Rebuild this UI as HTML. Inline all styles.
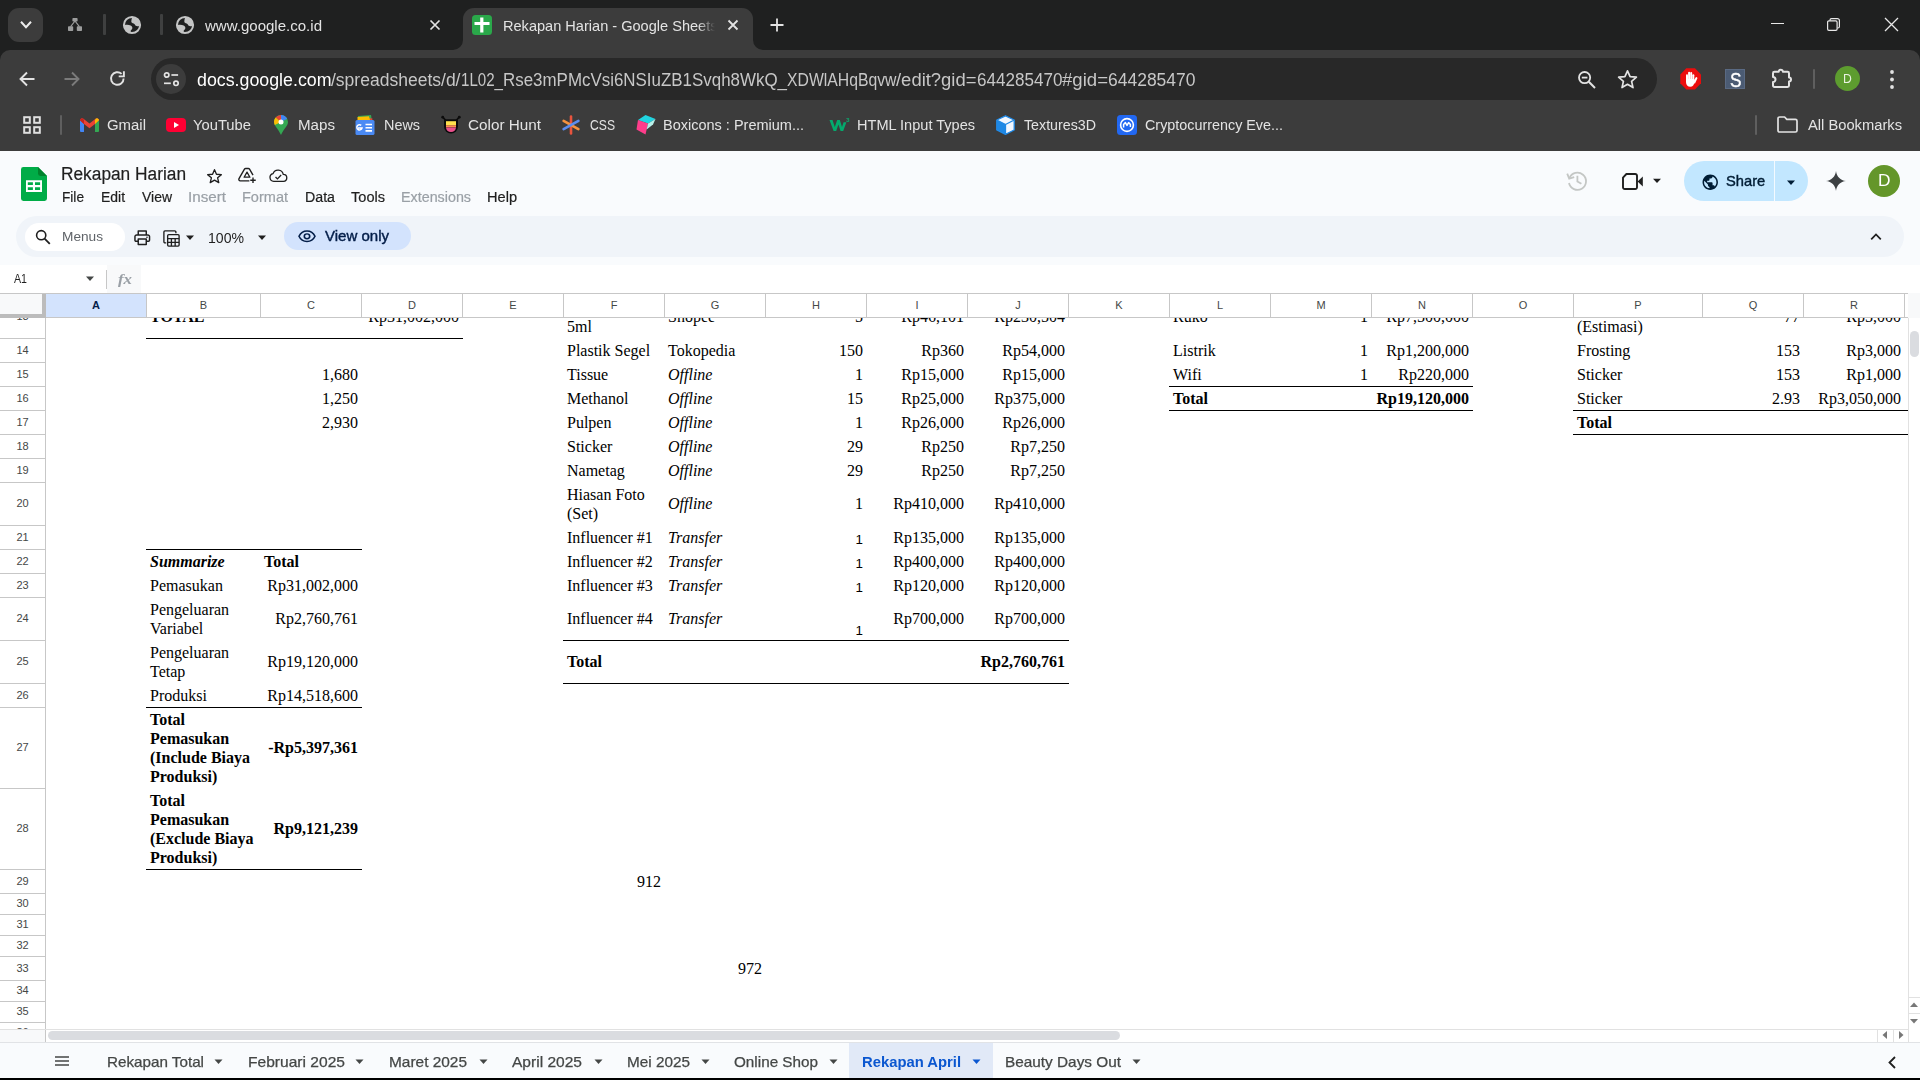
<!DOCTYPE html>
<html lang="id"><head><meta charset="utf-8"><title>Rekapan Harian - Google Sheets</title>
<style>
html,body{margin:0;padding:0;}
body{width:1920px;height:1080px;overflow:hidden;position:relative;background:#fff;font-family:"Liberation Sans",Arial,sans-serif;}
.t{position:absolute;white-space:nowrap;display:block;}
.b{position:absolute;box-sizing:border-box;}
svg{position:absolute;overflow:visible;}
.c{position:absolute;box-sizing:border-box;display:flex;font-family:"Liberation Serif","Times New Roman",serif;font-size:16px;line-height:19px;color:#000;padding:0 3px;overflow:hidden;}
.c.l{justify-content:flex-start;text-align:left;}
.c.r{justify-content:flex-end;text-align:right;}
.c.m{align-items:center;}
.c.bt{align-items:flex-end;}
.rh{position:absolute;left:0;width:45px;text-align:center;font-size:11px;color:#444746;font-family:"Liberation Sans",Arial,sans-serif;border-bottom:1px solid #c7c7c7;border-right:1px solid #c7c7c7;box-sizing:content-box;background:#fff;}
.ch{position:absolute;top:294px;height:23px;line-height:23px;text-align:center;font-size:11px;color:#444746;font-family:"Liberation Sans",Arial,sans-serif;border-right:1px solid #c7c7c7;box-sizing:content-box;background:#fff;}
</style></head><body>
<div class="b" style="left:0px;top:0px;width:1920px;height:151px;background:#1f2020;"></div>
<div class="b" style="left:0px;top:50px;width:1920px;height:101px;background:#3c3c3c;border-radius:10px 10px 0 0;"></div>
<div class="b" style="left:8px;top:7.7px;width:35px;height:34.5px;background:#3c3c3c;border-radius:11px;"></div>
<svg style="left:18.500px;top:19.300px" width="14" height="12" viewBox="0 0 14 12"><path d="M2 2.800 L7 8.200 L12 2.800" fill="none" stroke="#ececec" stroke-width="2"/></svg>
<svg style="left:68px;top:18px" width="14" height="13" viewBox="0 0 14 13"><g fill="#9c9d9d"><rect x="4.4" y="0" width="5.2" height="3.6" rx="0.8"/><rect x="0" y="8.200" width="5.2" height="4.8" rx="0.8"/><rect x="8.800" y="8.200" width="5.2" height="4.8" rx="0.8"/></g><path d="M7 3 L2.600 8.600 M7 3 L11.4 8.600" stroke="#9c9d9d" stroke-width="1.2" fill="none"/></svg>
<div class="b" style="left:103px;top:14px;width:2.5px;height:21px;background:#3f4040;border-radius:1px;"></div>
<svg style="left:123px;top:16px" width="18" height="18" viewBox="0 0 18 18"><circle cx="9" cy="9" r="8.1" fill="none" stroke="#c4c5c5" stroke-width="2"/><path d="M9.300 1 A8 8 0 0 1 17 8.900 C16 10.300 14 10.400 12.800 9.800 C11.800 9.200 11.900 7.900 10.700 7.500 C9.500 7.100 8.200 6.700 8.300 5.300 C8.400 3.800 8.800 2.200 9.300 1Z" fill="#c4c5c5"/><path d="M1 9.300 C3.400 8.500 6 8.700 7.600 9.600 C8.800 10.200 9.700 11.200 9.300 12.400 C9 13.400 7.900 13.700 7.700 14.700 C7.500 15.600 7.800 16.400 8.100 17 A8 8 0 0 1 1 9.300Z" fill="#c4c5c5"/></svg>
<div class="b" style="left:160px;top:14px;width:2.5px;height:21px;background:#3f4040;border-radius:1px;"></div>
<svg style="left:176px;top:16px" width="18" height="18" viewBox="0 0 18 18"><circle cx="9" cy="9" r="8.1" fill="none" stroke="#c4c5c5" stroke-width="2"/><path d="M9.300 1 A8 8 0 0 1 17 8.900 C16 10.300 14 10.400 12.800 9.800 C11.800 9.200 11.900 7.900 10.700 7.500 C9.500 7.100 8.200 6.700 8.300 5.300 C8.400 3.800 8.800 2.200 9.300 1Z" fill="#c4c5c5"/><path d="M1 9.300 C3.400 8.500 6 8.700 7.600 9.600 C8.800 10.200 9.700 11.200 9.300 12.400 C9 13.400 7.900 13.700 7.700 14.700 C7.500 15.600 7.800 16.400 8.100 17 A8 8 0 0 1 1 9.300Z" fill="#c4c5c5"/></svg>
<span class="t" id="t1" style="left:205px;top:10.5px;height:30px;line-height:30px;font-size:14.5px;color:#e3e3e3;font-weight:400;font-family:'Liberation Sans', Arial, sans-serif;font-style:normal;transform:scaleX(1.0368);transform-origin:left center;">www.google.co.id</span>
<svg style="left:429px;top:19px" width="12" height="12" viewBox="0 0 12 12"><path d="M1.5 1.5 L10.5 10.5 M10.5 1.5 L1.5 10.5" stroke="#e3e3e3" stroke-width="1.7" fill="none"/></svg>
<div class="b" style="left:463px;top:8px;width:290px;height:44px;background:#3c3c3c;border-radius:11px 11px 0 0;"></div>
<svg style="left:453px;top:40px" width="10" height="10" viewBox="0 0 10 10"><path d="M10 0 V10 H0 A10 10 0 0 0 10 0Z" fill="#3c3c3c"/></svg>
<svg style="left:753px;top:40px" width="10" height="10" viewBox="0 0 10 10"><path d="M0 0 V10 H10 A10 10 0 0 1 0 0Z" fill="#3c3c3c"/></svg>
<svg style="left:472px;top:15px" width="20" height="20" viewBox="0 0 20 20"><rect width="20" height="20" rx="3.5" fill="#2aa84a"/><path d="M8.2 2.5 H11.4 V7 H17.5 V10 H11.4 V17.5 H8.2 V10 H2.5 V7 H8.2Z" fill="#fff"/></svg>
<div class="b" style="left:503px;top:8px;width:212px;height:36px;overflow:hidden;-webkit-mask-image:linear-gradient(90deg,#000 92%,transparent 100%);mask-image:linear-gradient(90deg,#000 92%,transparent 100%);"><span class="t" id="t2" style="left:0px;top:2.5px;height:30px;line-height:30px;font-size:14.5px;color:#e3e3e3;font-weight:400;font-family:'Liberation Sans', Arial, sans-serif;font-style:normal;transform:scaleX(1.0042);transform-origin:left center;">Rekapan Harian - Google Sheets</span></div>
<svg style="left:727px;top:19px" width="12" height="12" viewBox="0 0 12 12"><path d="M1.5 1.5 L10.5 10.5 M10.5 1.5 L1.5 10.5" stroke="#e3e3e3" stroke-width="1.8" fill="none"/></svg>
<svg style="left:770px;top:18px" width="14" height="14" viewBox="0 0 14 14"><path d="M7 0.5 V13.5 M0.5 7 H13.5" stroke="#e3e3e3" stroke-width="1.8" fill="none"/></svg>
<div class="b" style="left:1771px;top:23px;width:13px;height:1.3px;background:#e8e8e8;"></div>
<svg style="left:1827px;top:18px" width="13" height="13" viewBox="0 0 13 13"><rect x="0.6" y="2.900" width="9.5" height="9.5" rx="1.300" fill="none" stroke="#e8e8e8" stroke-width="1.2"/><path d="M3 2.700 V2.100 A1.500 1.500 0 0 1 4.500 0.600 H10.400 A2 2 0 0 1 12.400 2.600 V8.500 A1.500 1.500 0 0 1 10.900 10 H10.300" fill="none" stroke="#e8e8e8" stroke-width="1.2"/></svg>
<svg style="left:1884px;top:17px" width="15" height="15" viewBox="0 0 15 15"><path d="M1 1 L14 14 M14 1 L1 14" stroke="#e8e8e8" stroke-width="1.3" fill="none"/></svg>
<svg style="left:19px;top:71px" width="16" height="16" viewBox="0 0 16 16"><path d="M15.5 8 H2 M8 1.5 L1.5 8 L8 14.5" fill="none" stroke="#e3e3e3" stroke-width="1.9"/></svg>
<svg style="left:64px;top:71px" width="16" height="16" viewBox="0 0 16 16"><path d="M0.5 8 H14 M8 1.5 L14.5 8 L8 14.5" fill="none" stroke="#7b7b7b" stroke-width="1.9"/></svg>
<svg style="left:109px;top:70px" width="17" height="17" viewBox="0 0 17 17"><path d="M14.6 8.5 A6.3 6.3 0 1 1 12.6 3.9" fill="none" stroke="#e3e3e3" stroke-width="1.9"/><path d="M14.9 1.2 V6.4 H9.7" fill="none" stroke="#e3e3e3" stroke-width="1.9"/></svg>
<div class="b" style="left:151px;top:58px;width:1506px;height:42px;background:#282828;border-radius:21px;"></div>
<div class="b" style="left:156px;top:63.7px;width:30px;height:30px;background:#3c3c3c;border-radius:15px;"></div>
<svg style="left:163px;top:71px" width="16" height="16" viewBox="0 0 16 16"><g fill="none" stroke="#e3e3e3" stroke-width="1.700"><circle cx="3.700" cy="4" r="2.200"/><path d="M8.400 4 H15.100"/><circle cx="13" cy="12.300" r="2.200"/><path d="M1 12.300 H7.800"/></g></svg>
<span class="t" id="t3" style="left:196.5px;top:64.5px;height:30px;line-height:30px;font-size:17.5px;color:#ffffff;font-weight:400;font-family:'Liberation Sans', Arial, sans-serif;font-style:normal;transform:scaleX(1.0165);transform-origin:left center;">docs.google.com</span>
<span class="t" id="t4" style="left:331px;top:64.5px;height:30px;line-height:30px;font-size:17.5px;color:#c7c7c7;font-weight:400;font-family:'Liberation Sans', Arial, sans-serif;font-style:normal;transform:scaleX(1.0008);transform-origin:left center;">/spreadsheets/d/</span>
<span class="t" id="t5" style="left:460.5px;top:64.5px;height:30px;line-height:30px;font-size:17.5px;color:#c7c7c7;font-weight:400;font-family:'Liberation Sans', Arial, sans-serif;font-style:normal;transform:scaleX(0.8629);transform-origin:left center;">1L02_</span>
<span class="t" id="t6" style="left:502.5px;top:64.5px;height:30px;line-height:30px;font-size:17.5px;color:#c7c7c7;font-weight:400;font-family:'Liberation Sans', Arial, sans-serif;font-style:normal;transform:scaleX(0.9669);transform-origin:left center;">Rse3mPMcVsi6NSIuZB1Svqh8WkQ_</span>
<span class="t" id="t7" style="left:786.5px;top:64.5px;height:30px;line-height:30px;font-size:17.5px;color:#c7c7c7;font-weight:400;font-family:'Liberation Sans', Arial, sans-serif;font-style:normal;transform:scaleX(0.9008);transform-origin:left center;">XDWlAHqBqvw</span>
<span class="t" id="t8" style="left:896px;top:64.5px;height:30px;line-height:30px;font-size:17.5px;color:#c7c7c7;font-weight:400;font-family:'Liberation Sans', Arial, sans-serif;font-style:normal;transform:scaleX(1.0538);transform-origin:left center;">/edit?gid=</span>
<span class="t" id="t9" style="left:976.5px;top:64.5px;height:30px;line-height:30px;font-size:17.5px;color:#c7c7c7;font-weight:400;font-family:'Liberation Sans', Arial, sans-serif;font-style:normal;transform:scaleX(0.9759);transform-origin:left center;">644285470</span>
<span class="t" id="t10" style="left:1062px;top:64.5px;height:30px;line-height:30px;font-size:17.5px;color:#c7c7c7;font-weight:400;font-family:'Liberation Sans', Arial, sans-serif;font-style:normal;transform:scaleX(1.0620);transform-origin:left center;">#gid=</span>
<span class="t" id="t11" style="left:1108px;top:64.5px;height:30px;line-height:30px;font-size:17.5px;color:#c7c7c7;font-weight:400;font-family:'Liberation Sans', Arial, sans-serif;font-style:normal;transform:scaleX(0.9988);transform-origin:left center;">644285470</span>
<svg style="left:1577px;top:70px" width="20" height="20" viewBox="0 0 20 20"><g fill="none" stroke="#e3e3e3" stroke-width="1.8"><circle cx="7.6" cy="7.6" r="5.6"/><path d="M11.8 11.8 L18 18" stroke-width="2"/><path d="M4.8 7.6 H10.4"/></g></svg>
<svg style="left:1617px;top:69px" width="21" height="20" viewBox="0 0 21 20"><path d="M10.5 1.8 L13.1 7.6 L19.4 8.2 L14.6 12.4 L16 18.6 L10.5 15.3 L5 18.6 L6.4 12.4 L1.6 8.2 L7.9 7.6Z" fill="none" stroke="#e3e3e3" stroke-width="1.7" stroke-linejoin="round"/></svg>
<svg style="left:1680px;top:68.300px" width="21.300" height="21.700" viewBox="0 0 21.300 21.700"><path d="M6.300 0.300 H15 L21 6.400 V15.300 L15 21.400 H6.300 L0.300 15.300 V6.400Z" fill="#ec0d0d"/><g fill="#fff"><rect x="6" y="6.200" width="2" height="8" rx="1"/><rect x="8.100" y="3.700" width="2" height="10" rx="1"/><rect x="10.200" y="4.100" width="2" height="10" rx="1"/><rect x="12.300" y="6.200" width="2" height="8" rx="1"/><path d="M6 11 H14.300 V14 C14.300 17 12.700 18.800 10.200 18.800 C7.700 18.800 6 17 6 14Z"/><path d="M13.300 13.500 L15.600 9.400 A1 1 0 0 1 17.300 10.400 L14.800 16Z"/></g></svg>
<div class="b" style="left:1725.4px;top:69.4px;width:20px;height:20px;background:#4b5b73;border:1px solid #5a6a83;"></div>
<span class="t" id="t12" style="left:1730px;top:64.6px;height:30px;line-height:30px;font-size:19.8px;color:#ffffff;font-weight:400;font-family:'Liberation Sans', Arial, sans-serif;font-style:normal;transform:scaleX(0.8710);transform-origin:left center;-webkit-text-stroke:0.4px #fff;">S</span>
<svg style="left:1769.700px;top:67px" width="24" height="24" viewBox="0 0 24 24"><path d="M4.400 4.800 H8.700 A2.100 2.100 0 0 1 12.900 4.800 H17.600 A1.400 1.400 0 0 1 19 6.200 V10.500 A2 2 0 0 1 19 14.500 V18.500 A1.400 1.400 0 0 1 17.600 19.900 H4.400 A1.400 1.400 0 0 1 3 18.500 V15.100 A2.500 2.500 0 0 0 3 10.100 V6.200 A1.400 1.400 0 0 1 4.400 4.800Z" fill="none" stroke="#e3e3e3" stroke-width="2" stroke-linejoin="round"/></svg>
<div class="b" style="left:1813px;top:69px;width:2px;height:20px;background:#5f5f5f;border-radius:1px;"></div>
<div class="b" style="left:1835px;top:66.3px;width:25px;height:25px;background:#5d9c2f;border-radius:13px;"></div>
<span class="t" id="t13" style="left:1843.2px;top:63.8px;height:30px;line-height:30px;font-size:12.5px;color:#eaf2e2;font-weight:400;font-family:'Liberation Sans', Arial, sans-serif;font-style:normal;transform:scaleX(0.9744);transform-origin:left center;">D</span>
<svg style="left:1889px;top:69px" width="6" height="21" viewBox="0 0 6 21"><g fill="#e3e3e3"><circle cx="3" cy="3" r="1.9"/><circle cx="3" cy="10.5" r="1.9"/><circle cx="3" cy="18" r="1.9"/></g></svg>
<svg style="left:23px;top:116px" width="18" height="18" viewBox="0 0 18 18"><g fill="none" stroke="#e0e0e0" stroke-width="2"><rect x="1.200" y="1.200" width="5.600" height="5.600"/><rect x="11.200" y="1.200" width="5.600" height="5.600"/><rect x="1.200" y="11.200" width="5.600" height="5.600"/><rect x="11.200" y="11.200" width="5.600" height="5.600"/></g></svg>
<div class="b" style="left:60px;top:115px;width:2px;height:20px;background:#5f5f5f;border-radius:1px;"></div>
<svg style="left:80px;top:118px" width="19" height="14" viewBox="0 0 19 14"><path d="M0 2 V13 A1 1 0 0 0 1 14 H4 V6Z" fill="#4285f4"/><path d="M19 2 V13 A1 1 0 0 1 18 14 H15 V6Z" fill="#34a853"/><path d="M0 2.2 A2 2 0 0 1 3.4 0.8 L9.5 5.6 L15.6 0.8 A2 2 0 0 1 19 2.2 L15 6 L9.5 10.2 L4 6Z" fill="#ea4335"/><path d="M0 2.2 L4 6 V2.4 L3.4 0.8 A2 2 0 0 0 0 2.2Z" fill="#c5221f"/><path d="M19 2.2 L15 6 V2.4 L15.6 0.8 A2 2 0 0 1 19 2.2Z" fill="#fbbc04"/></svg>
<span class="t" id="t14" style="left:107px;top:109.5px;height:30px;line-height:30px;font-size:15.5px;color:#e3e3e3;font-weight:400;font-family:'Liberation Sans', Arial, sans-serif;font-style:normal;transform:scaleX(0.9633);transform-origin:left center;">Gmail</span>
<svg style="left:166px;top:118px" width="20" height="14" viewBox="0 0 20 14"><rect width="20" height="14" rx="4" fill="#ff0033"/><path d="M8 4 L13 7 L8 10Z" fill="#fff"/></svg>
<span class="t" id="t15" style="left:193px;top:109.5px;height:30px;line-height:30px;font-size:15.5px;color:#e3e3e3;font-weight:400;font-family:'Liberation Sans', Arial, sans-serif;font-style:normal;transform:scaleX(0.9520);transform-origin:left center;">YouTube</span>
<svg style="left:274px;top:115px" width="14" height="20" viewBox="0 0 14 20"><path d="M7 0 A7 7 0 0 1 14 7 C14 11 9.5 14 7 20 C4.5 14 0 11 0 7 A7 7 0 0 1 7 0Z" fill="#34a853"/><path d="M7 0 A7 7 0 0 1 13.2 3.8 L7 7Z" fill="#4285f4"/><path d="M7 0 A7 7 0 0 0 1.6 2.6 L7 7Z" fill="#ea4335"/><path d="M1.6 2.6 A7 7 0 0 0 0.8 10 L7 7Z" fill="#fbbc04"/><circle cx="7" cy="7" r="2.5" fill="#fff"/></svg>
<span class="t" id="t16" style="left:298px;top:109.5px;height:30px;line-height:30px;font-size:15.5px;color:#e3e3e3;font-weight:400;font-family:'Liberation Sans', Arial, sans-serif;font-style:normal;transform:scaleX(0.9761);transform-origin:left center;">Maps</span>
<svg style="left:355px;top:115px" width="20" height="20" viewBox="0 0 20 20"><path d="M3 1 L16 0 L17 6 H3Z" fill="#34a853"/><path d="M4 2.5 L17.5 3.5 L17 8 H4Z" fill="#ea4335"/><path d="M2.5 2 L14 1.2 L15 5 H2.5Z" fill="#fbbc04"/><rect x="0.5" y="5" width="19" height="15" rx="1.6" fill="#4a8af4"/><path d="M3 13 H7 A2.6 2.6 0 1 1 6.2 10.4" fill="none" stroke="#fff" stroke-width="1.5"/><path d="M10.5 9.5 H17 M10.5 12.7 H17 M10.5 15.9 H17" stroke="#fff" stroke-width="1.6"/></svg>
<span class="t" id="t17" style="left:384px;top:109.5px;height:30px;line-height:30px;font-size:15.5px;color:#e3e3e3;font-weight:400;font-family:'Liberation Sans', Arial, sans-serif;font-style:normal;transform:scaleX(0.9287);transform-origin:left center;">News</span>
<svg style="left:441px;top:115px" width="20" height="20" viewBox="0 0 20 20"><path d="M1.600 2.200 L4.500 5 M18.400 2.200 L15.500 5" stroke="#0c0c0c" stroke-width="1.700"/><circle cx="1.700" cy="2.200" r="1.400" fill="#0c0c0c"/><circle cx="18.300" cy="2.200" r="1.400" fill="#0c0c0c"/><path d="M3 4.300 H17 V11.500 A7 7 0 0 1 3 11.500Z" fill="#0c0c0c"/><path d="M5 6.200 H15 V10.200 H5Z" fill="#ffe14d"/><path d="M5 10.200 H15 V12.400 H5Z" fill="#ff8f52"/><path d="M5 12.400 H15 A5 4.600 0 0 1 5 12.400Z" fill="#e9508c"/></svg>
<span class="t" id="t18" style="left:468px;top:109.5px;height:30px;line-height:30px;font-size:15.5px;color:#e3e3e3;font-weight:400;font-family:'Liberation Sans', Arial, sans-serif;font-style:normal;transform:scaleX(0.9852);transform-origin:left center;">Color Hunt</span>
<svg style="left:562px;top:115px" width="18" height="20" viewBox="0 0 18 20"><g stroke-width="2.6" stroke-linecap="round" fill="none"><path d="M9 1.5 V18.5" stroke="#e8543e"/><path d="M1.6 5.8 L16.4 14.2" stroke="#f5923e"/><path d="M16.4 5.8 L1.6 14.2" stroke="#5b8def"/></g></svg>
<span class="t" id="t19" style="left:590px;top:109.5px;height:30px;line-height:30px;font-size:15.5px;color:#e3e3e3;font-weight:400;font-family:'Liberation Sans', Arial, sans-serif;font-style:normal;transform:scaleX(0.7843);transform-origin:left center;">CSS</span>
<svg style="left:636px;top:115px" width="20" height="20" viewBox="0 0 20 20"><path d="M9.5 0 L19.5 4 L12 8.5 L2 5Z" fill="#21d4e0"/><path d="M2 5 L12 8.5 L9.5 19.5 L0.5 14.5Z" fill="#ff3d8b"/><path d="M12 8.5 L19.5 4 L17 9.5 L10.6 14.5Z" fill="#b8f0ea"/></svg>
<span class="t" id="t20" style="left:663px;top:109.5px;height:30px;line-height:30px;font-size:15.5px;color:#e3e3e3;font-weight:400;font-family:'Liberation Sans', Arial, sans-serif;font-style:normal;transform:scaleX(0.9353);transform-origin:left center;">Boxicons : Premium...</span>
<svg style="left:829px;top:117px" width="21" height="15" viewBox="0 0 21 15"><path d="M0.5 3 L3.5 3 L5.8 10 L8.2 3 L10.8 3 L13 10 L14.6 5.2 L17.4 5.2 L14.2 14 H11.6 L9.4 7.4 L7.2 14 H4.6Z" fill="#04aa6d"/><text x="17.2" y="5" font-size="6" font-weight="700" fill="#04aa6d" font-family="Liberation Sans,sans-serif">3</text></svg>
<span class="t" id="t21" style="left:857px;top:109.5px;height:30px;line-height:30px;font-size:15.5px;color:#e3e3e3;font-weight:400;font-family:'Liberation Sans', Arial, sans-serif;font-style:normal;transform:scaleX(0.9381);transform-origin:left center;">HTML Input Types</span>
<svg style="left:996px;top:115px" width="19" height="20" viewBox="0 0 19 20"><path d="M9.500 0.800 L18.200 5 V15 L9.500 19.300 L0.800 15 V5Z" fill="#f2f7ff"/><path d="M0.800 5 L9.500 9.500 V19.300 L0.800 15Z" fill="#1e88e5"/><path d="M9.500 0.800 L18.200 5 V15 L9.500 19.300 L0.800 15 V5Z M0.800 5 L9.500 9.500 L18.200 5 M9.500 9.500 V19.300" fill="none" stroke="#1e88e5" stroke-width="1.300" stroke-linejoin="round"/></svg>
<span class="t" id="t22" style="left:1024px;top:109.5px;height:30px;line-height:30px;font-size:15.5px;color:#e3e3e3;font-weight:400;font-family:'Liberation Sans', Arial, sans-serif;font-style:normal;transform:scaleX(0.9183);transform-origin:left center;">Textures3D</span>
<svg style="left:1117px;top:115px" width="20" height="20" viewBox="0 0 20 20"><rect width="20" height="20" rx="3.5" fill="#2268f2"/><circle cx="10" cy="10" r="6.4" fill="none" stroke="#fff" stroke-width="1.6"/><path d="M6.6 12.4 V9.6 L8.4 7.6 L10 10.4 L11.6 7.6 L13.4 9.6 V12" fill="none" stroke="#fff" stroke-width="1.5" stroke-linejoin="round"/></svg>
<span class="t" id="t23" style="left:1145px;top:109.5px;height:30px;line-height:30px;font-size:15.5px;color:#e3e3e3;font-weight:400;font-family:'Liberation Sans', Arial, sans-serif;font-style:normal;transform:scaleX(0.9260);transform-origin:left center;">Cryptocurrency Eve...</span>
<div class="b" style="left:1755px;top:115px;width:2px;height:20px;background:#5f5f5f;border-radius:1px;"></div>
<svg style="left:1777px;top:116px" width="21" height="17" viewBox="0 0 21 17"><path d="M1 2.6 A1.6 1.6 0 0 1 2.6 1 H7.6 L9.8 3.4 H18.4 A1.6 1.6 0 0 1 20 5 V14.4 A1.6 1.6 0 0 1 18.4 16 H2.6 A1.6 1.6 0 0 1 1 14.4Z" fill="none" stroke="#e3e3e3" stroke-width="1.7" stroke-linejoin="round"/></svg>
<span class="t" id="t24" style="left:1808px;top:109.5px;height:30px;line-height:30px;font-size:15.5px;color:#e3e3e3;font-weight:400;font-family:'Liberation Sans', Arial, sans-serif;font-style:normal;transform:scaleX(0.9489);transform-origin:left center;">All Bookmarks</span>
<div class="b" style="left:0px;top:151px;width:1920px;height:142px;background:#f9fbfd;"></div>
<svg style="left:21px;top:167px" width="26" height="34" viewBox="0 0 26 34"><path d="M2.400 0 H17 L26 9 V31.600 A2.400 2.400 0 0 1 23.600 34 H2.400 A2.400 2.400 0 0 1 0 31.600 V2.400 A2.400 2.400 0 0 1 2.400 0Z" fill="#00ac47"/><path d="M17 0 L26 9 H19.400 A2.400 2.400 0 0 1 17 6.600Z" fill="#00832d"/><path d="M5 13.200 H21 V25 H5Z M6.800 15.300 V18.100 H11.900 V15.300Z M14 15.300 V18.100 H19.100 V15.300Z M6.800 20.200 V23 H11.900 V20.200Z M14 20.200 V23 H19.100 V20.200Z" fill="#fff" fill-rule="evenodd"/></svg>
<span class="t" id="t25" style="left:61px;top:159.0px;height:30px;line-height:30px;font-size:18px;color:#1f1f1f;font-weight:400;font-family:'Liberation Sans', Arial, sans-serif;font-style:normal;transform:scaleX(0.9610);transform-origin:left center;-webkit-text-stroke:0.2px #1f1f1f;">Rekapan Harian</span>
<svg style="left:205.500px;top:167.500px" width="17" height="16" viewBox="0 0 19 18"><path d="M9.5 1.9 L11.7 7 L17.2 7.5 L13 11.1 L14.3 16.5 L9.5 13.6 L4.7 16.5 L6 11.1 L1.8 7.5 L7.3 7Z" fill="none" stroke="#1f1f1f" stroke-width="1.5" stroke-linejoin="round"/></svg>
<svg style="left:236.500px;top:167px" width="20" height="17.300" viewBox="0 0 22 19"><path d="M13.6 15.2 H3.6 A1.6 1.6 0 0 1 2.2 12.8 L8.2 2.4 A1.6 1.6 0 0 1 9.6 1.6 H12.4 A1.6 1.6 0 0 1 13.8 2.4 L17.6 9" fill="none" stroke="#1f1f1f" stroke-width="1.5" stroke-linejoin="round"/><path d="M11 5.6 L14.2 11.2 H7.8Z" fill="none" stroke="#1f1f1f" stroke-width="1.4" stroke-linejoin="round"/><path d="M17.6 11.6 V17.6 M14.6 14.6 H20.6" stroke="#1f1f1f" stroke-width="1.5" fill="none"/></svg>
<svg style="left:268.500px;top:168.800px" width="18.500" height="13.200" viewBox="0 0 21 15"><path d="M5.4 14 A4.4 4.4 0 0 1 4.6 5.3 A6 6 0 0 1 16.2 6.2 A3.9 3.9 0 0 1 16.4 14Z" fill="none" stroke="#1f1f1f" stroke-width="1.5" stroke-linejoin="round"/><path d="M7.4 9 L9.6 11.2 L13.8 6.8" fill="none" stroke="#1f1f1f" stroke-width="1.5"/></svg>
<span class="t" id="t26" style="left:62px;top:181.8px;height:30px;line-height:30px;font-size:14px;color:#1f1f1f;font-weight:400;font-family:'Liberation Sans', Arial, sans-serif;font-style:normal;transform:scaleX(0.9751);transform-origin:left center;-webkit-text-stroke:0.2px #1f1f1f;">File</span>
<span class="t" id="t27" style="left:101px;top:181.8px;height:30px;line-height:30px;font-size:14px;color:#1f1f1f;font-weight:400;font-family:'Liberation Sans', Arial, sans-serif;font-style:normal;transform:scaleX(0.9948);transform-origin:left center;-webkit-text-stroke:0.2px #1f1f1f;">Edit</span>
<span class="t" id="t28" style="left:142px;top:181.8px;height:30px;line-height:30px;font-size:14px;color:#1f1f1f;font-weight:400;font-family:'Liberation Sans', Arial, sans-serif;font-style:normal;transform:scaleX(0.9969);transform-origin:left center;-webkit-text-stroke:0.2px #1f1f1f;">View</span>
<span class="t" id="t29" style="left:188px;top:181.8px;height:30px;line-height:30px;font-size:14px;color:#9aa0a6;font-weight:400;font-family:'Liberation Sans', Arial, sans-serif;font-style:normal;transform:scaleX(1.0852);transform-origin:left center;-webkit-text-stroke:0.2px #9aa0a6;">Insert</span>
<span class="t" id="t30" style="left:242px;top:181.8px;height:30px;line-height:30px;font-size:14px;color:#9aa0a6;font-weight:400;font-family:'Liberation Sans', Arial, sans-serif;font-style:normal;transform:scaleX(1.0374);transform-origin:left center;-webkit-text-stroke:0.2px #9aa0a6;">Format</span>
<span class="t" id="t31" style="left:305px;top:181.8px;height:30px;line-height:30px;font-size:14px;color:#1f1f1f;font-weight:400;font-family:'Liberation Sans', Arial, sans-serif;font-style:normal;transform:scaleX(1.0143);transform-origin:left center;-webkit-text-stroke:0.2px #1f1f1f;">Data</span>
<span class="t" id="t32" style="left:351px;top:181.8px;height:30px;line-height:30px;font-size:14px;color:#1f1f1f;font-weight:400;font-family:'Liberation Sans', Arial, sans-serif;font-style:normal;transform:scaleX(1.0402);transform-origin:left center;-webkit-text-stroke:0.2px #1f1f1f;">Tools</span>
<span class="t" id="t33" style="left:401px;top:181.8px;height:30px;line-height:30px;font-size:14px;color:#9aa0a6;font-weight:400;font-family:'Liberation Sans', Arial, sans-serif;font-style:normal;transform:scaleX(1.0221);transform-origin:left center;-webkit-text-stroke:0.2px #9aa0a6;">Extensions</span>
<span class="t" id="t34" style="left:487px;top:181.8px;height:30px;line-height:30px;font-size:14px;color:#1f1f1f;font-weight:400;font-family:'Liberation Sans', Arial, sans-serif;font-style:normal;transform:scaleX(1.0418);transform-origin:left center;-webkit-text-stroke:0.2px #1f1f1f;">Help</span>
<svg style="left:1566px;top:170px" width="22" height="22" viewBox="0 0 22 22"><path d="M3.4 8.2 A8.6 8.6 0 1 1 3 13" fill="none" stroke="#c4c7c5" stroke-width="1.8"/><path d="M1.2 3.6 L3.2 8.6 L8.2 7.2" fill="none" stroke="#c4c7c5" stroke-width="1.8"/><path d="M11.4 5.8 V11.4 L15.4 13.8" fill="none" stroke="#c4c7c5" stroke-width="1.8"/></svg>
<svg style="left:1622px;top:173px" width="22" height="17" viewBox="0 0 22 17"><path d="M4.4 1 H13.2 A1.8 1.8 0 0 1 15 2.8 V14.2 A1.8 1.8 0 0 1 13.2 16 H2.8 A1.8 1.8 0 0 1 1 14.2 V4.6Z" fill="none" stroke="#1f1f1f" stroke-width="1.9" stroke-linejoin="round"/><path d="M15.6 8.5 L20.8 3.4 V13.6Z" fill="#1f1f1f"/></svg>
<svg style="left:1652px;top:178px" width="10" height="6" viewBox="0 0 10 6"><path d="M1 0.8 H9 L5 5Z" fill="#1f1f1f"/></svg>
<div class="b" style="left:1684px;top:161px;width:124px;height:40px;background:#c2e7ff;border-radius:20px;"></div>
<div class="b" style="left:1774px;top:161px;width:1px;height:40px;background:#f4faff;"></div>
<svg style="left:1701.250px;top:172.750px" width="18.500" height="18.500" viewBox="0 0 24 24"><path fill="#001d35" fill-rule="evenodd" d="M12 2C6.48 2 2 6.48 2 12s4.48 10 10 10 10-4.48 10-10S17.52 2 12 2zm-1 17.93c-3.950-.49-7-3.850-7-7.930 0-.62.080-1.210.210-1.790L9 15v1c0 1.100.900 2 2 2v1.930zm6.900-2.540c-.26-.81-1-1.390-1.900-1.390h-1v-3c0-.55-.45-1-1-1H8v-2h2c.550 0 1-.45 1-1V7h2c1.100 0 2-.9 2-2v-.41c2.930 1.190 5 4.060 5 7.410 0 2.080-.8 3.970-2.100 5.390z"/></svg>
<span class="t" id="t35" style="left:1726.2px;top:166.3px;height:30px;line-height:30px;font-size:14.5px;color:#001d35;font-weight:400;font-family:'Liberation Sans', Arial, sans-serif;font-style:normal;transform:scaleX(1.0128);transform-origin:left center;-webkit-text-stroke:0.4px #001d35;">Share</span>
<svg style="left:1786px;top:179.600px" width="10" height="6" viewBox="0 0 10 6"><path d="M1 0.6 H9 L5 5Z" fill="#001d35"/></svg>
<svg style="left:1826px;top:171px" width="20" height="20" viewBox="0 0 20 20"><path d="M10 0 C10.6 5.6 14.4 9.4 20 10 C14.4 10.6 10.6 14.4 10 20 C9.4 14.4 5.6 10.6 0 10 C5.6 9.4 9.4 5.6 10 0Z" fill="#3c4043"/></svg>
<div class="b" style="left:1868px;top:165px;width:32px;height:32px;background:#64962a;border-radius:16px;"></div>
<span class="t" id="t36" style="left:1877.8px;top:166.2px;height:30px;line-height:30px;font-size:16px;color:#ffffff;font-weight:400;font-family:'Liberation Sans', Arial, sans-serif;font-style:normal;transform:scaleX(1.0811);transform-origin:left center;">D</span>
<div class="b" style="left:16px;top:216px;width:1888px;height:41px;background:#f0f4f9;border-radius:21px;"></div>
<div class="b" style="left:25px;top:223px;width:100px;height:28px;background:#ffffff;border-radius:14px;"></div>
<svg style="left:35px;top:229px" width="16" height="16" viewBox="0 0 16 16"><circle cx="6.2" cy="6.2" r="4.6" fill="none" stroke="#1f1f1f" stroke-width="1.6"/><path d="M9.6 9.6 L14.8 14.8" stroke="#1f1f1f" stroke-width="1.8" fill="none"/></svg>
<span class="t" id="t37" style="left:62px;top:221.5px;height:30px;line-height:30px;font-size:13.5px;color:#5f6368;font-weight:400;font-family:'Liberation Sans', Arial, sans-serif;font-style:normal;transform:scaleX(1.0116);transform-origin:left center;">Menus</span>
<svg style="left:134px;top:230px" width="16.500" height="15.500" viewBox="0 0 18 17"><g fill="none" stroke="#1f1f1f" stroke-width="1.6" stroke-linejoin="round"><path d="M4.6 5.4 V1.2 H13.4 V5.4"/><path d="M4.4 12.4 H2.2 A1.2 1.2 0 0 1 1 11.2 V7.2 A1.8 1.8 0 0 1 2.8 5.4 H15.2 A1.8 1.8 0 0 1 17 7.2 V11.2 A1.2 1.2 0 0 1 15.800 12.4 H13.6"/><path d="M4.6 9.8 H13.4 V15.8 H4.6Z"/></g><circle cx="14.2" cy="8" r="0.9" fill="#1f1f1f"/></svg>
<svg style="left:163px;top:229.500px" width="17" height="17" viewBox="0 0 19 19"><g fill="none" stroke="#1f1f1f" stroke-width="1.5" stroke-linejoin="round"><path d="M3.6 14.4 H2.2 A1.2 1.2 0 0 1 1 13.2 V2.2 A1.2 1.2 0 0 1 2.2 1 H13.2 A1.2 1.2 0 0 1 14.4 2.2 V3.6"/><rect x="5.2" y="5.2" width="12.8" height="12.8" rx="1.2"/><path d="M5.2 9.6 H18 M9.4 9.6 V18 M13.6 9.6 V18 M5.2 13.8 H18"/></g></svg>
<svg style="left:185px;top:235px" width="10" height="6" viewBox="0 0 10 6"><path d="M1 0.6 H9 L5 5Z" fill="#1f1f1f"/></svg>
<span class="t" id="t38" style="left:208px;top:222.5px;height:30px;line-height:30px;font-size:14px;color:#1f1f1f;font-weight:400;font-family:'Liberation Sans', Arial, sans-serif;font-style:normal;transform:scaleX(1.0052);transform-origin:left center;">100%</span>
<svg style="left:257px;top:235px" width="10" height="6" viewBox="0 0 10 6"><path d="M1 0.6 H9 L5 5Z" fill="#1f1f1f"/></svg>
<div class="b" style="left:284px;top:222px;width:127px;height:28px;background:#d3e3fd;border-radius:14px;"></div>
<svg style="left:298px;top:229.600px" width="18" height="12.600" viewBox="0 0 18 14" preserveAspectRatio="none"><path d="M1 7 C2.6 3.2 5.6 1.2 9 1.2 C12.4 1.2 15.400 3.2 17 7 C15.400 10.800 12.4 12.8 9 12.8 C5.6 12.8 2.6 10.800 1 7Z" fill="none" stroke="#041e49" stroke-width="1.6"/><circle cx="9" cy="7" r="2.7" fill="none" stroke="#041e49" stroke-width="1.6"/></svg>
<span class="t" id="t39" style="left:325.2px;top:220.7px;height:30px;line-height:30px;font-size:14.2px;color:#041e49;font-weight:400;font-family:'Liberation Sans', Arial, sans-serif;font-style:normal;transform:scaleX(1.0584);transform-origin:left center;-webkit-text-stroke:0.4px #041e49;">View only</span>
<svg style="left:1870px;top:232px" width="12" height="9" viewBox="0 0 12 9"><path d="M1.2 7.4 L6 2.4 L10.8 7.4" fill="none" stroke="#1f1f1f" stroke-width="1.7"/></svg>
<div class="b" style="left:0px;top:265px;width:1920px;height:28px;background:#ffffff;"></div>
<div class="b" style="left:107px;top:265px;width:34px;height:28px;background:#f8f9fa;"></div>
<span class="t" id="t40" style="left:14px;top:263.5px;height:30px;line-height:30px;font-size:12px;color:#1f1f1f;font-weight:400;font-family:'Liberation Sans', Arial, sans-serif;font-style:normal;transform:scaleX(0.8851);transform-origin:left center;">A1</span>
<svg style="left:85px;top:276px" width="10" height="6" viewBox="0 0 10 6"><path d="M1 0.4 H9 L5 5Z" fill="#444746"/></svg>
<div class="b" style="left:106px;top:270px;width:1px;height:19px;background:#c7c7c7;"></div>
<span class="t" id="t41" style="left:118px;top:263.5px;height:30px;line-height:30px;font-size:15px;color:#9aa0a6;font-weight:700;font-family:'Liberation Serif', 'Times New Roman', serif;font-style:italic;transform:scaleX(1.1200);transform-origin:left center;">fx</span>
<div class="b" style="left:0px;top:293px;width:1920px;height:736px;background:#ffffff;"></div>
<div class="b" style="left:0;top:318px;width:1908px;height:711px;overflow:hidden;">
<div class="rh" style="top:-22px;height:42px;line-height:41px;">13</div>
<div class="rh" style="top:21px;height:23px;line-height:22px;">14</div>
<div class="rh" style="top:45px;height:23px;line-height:22px;">15</div>
<div class="rh" style="top:69px;height:23px;line-height:22px;">16</div>
<div class="rh" style="top:93px;height:23px;line-height:22px;">17</div>
<div class="rh" style="top:117px;height:23px;line-height:22px;">18</div>
<div class="rh" style="top:141px;height:23px;line-height:22px;">19</div>
<div class="rh" style="top:165px;height:42px;line-height:41px;">20</div>
<div class="rh" style="top:208px;height:23px;line-height:22px;">21</div>
<div class="rh" style="top:232px;height:23px;line-height:22px;">22</div>
<div class="rh" style="top:256px;height:23px;line-height:22px;">23</div>
<div class="rh" style="top:280px;height:42px;line-height:41px;">24</div>
<div class="rh" style="top:323px;height:42px;line-height:41px;">25</div>
<div class="rh" style="top:366px;height:23px;line-height:22px;">26</div>
<div class="rh" style="top:390px;height:80px;line-height:79px;">27</div>
<div class="rh" style="top:471px;height:80px;line-height:79px;">28</div>
<div class="rh" style="top:552px;height:23px;line-height:22px;">29</div>
<div class="rh" style="top:576px;height:20px;line-height:19px;">30</div>
<div class="rh" style="top:597px;height:20px;line-height:19px;">31</div>
<div class="rh" style="top:618px;height:20px;line-height:19px;">32</div>
<div class="rh" style="top:639px;height:23px;line-height:22px;">33</div>
<div class="rh" style="top:663px;height:20px;line-height:19px;">34</div>
<div class="rh" style="top:684px;height:20px;line-height:19px;">35</div>
<div class="rh" style="top:705px;height:20px;line-height:19px;">36</div>
<div class="c l m" style="left:147px;top:-22px;width:113px;height:42px;font-weight:700;padding-bottom:1px;"><span>TOTAL</span></div>
<div class="c r m" style="left:362px;top:-22px;width:100px;height:42px;padding-bottom:1px;"><span>Rp31,002,000</span></div>
<div class="c l m" style="left:564px;top:-22px;width:100px;height:42px;"><span>Botol Kaca<br>5ml</span></div>
<div class="c l m" style="left:665px;top:-22px;width:100px;height:42px;padding-bottom:1px;"><span>Shopee</span></div>
<div class="c r m" style="left:766px;top:-22px;width:100px;height:42px;padding-bottom:1px;"><span>5</span></div>
<div class="c r m" style="left:867px;top:-22px;width:100px;height:42px;padding-bottom:1px;"><span>Rp46,101</span></div>
<div class="c r m" style="left:968px;top:-22px;width:100px;height:42px;padding-bottom:1px;"><span>Rp230,504</span></div>
<div class="c l m" style="left:1170px;top:-22px;width:100px;height:42px;padding-bottom:1px;"><span>Ruko</span></div>
<div class="c r m" style="left:1271px;top:-22px;width:100px;height:42px;padding-bottom:1px;"><span>1</span></div>
<div class="c r m" style="left:1372px;top:-22px;width:100px;height:42px;padding-bottom:1px;"><span>Rp7,500,000</span></div>
<div class="c l m" style="left:1574px;top:-22px;width:128px;height:42px;"><span>Packaging<br>(Estimasi)</span></div>
<div class="c r m" style="left:1703px;top:-22px;width:100px;height:42px;padding-bottom:1px;"><span>77</span></div>
<div class="c r m" style="left:1804px;top:-22px;width:100px;height:42px;padding-bottom:1px;"><span>Rp5,000</span></div>
<div class="c l m" style="left:564px;top:21px;width:100px;height:23px;"><span>Plastik Segel</span></div>
<div class="c l m" style="left:665px;top:21px;width:100px;height:23px;"><span>Tokopedia</span></div>
<div class="c r m" style="left:766px;top:21px;width:100px;height:23px;"><span>150</span></div>
<div class="c r m" style="left:867px;top:21px;width:100px;height:23px;"><span>Rp360</span></div>
<div class="c r m" style="left:968px;top:21px;width:100px;height:23px;"><span>Rp54,000</span></div>
<div class="c l m" style="left:1170px;top:21px;width:100px;height:23px;"><span>Listrik</span></div>
<div class="c r m" style="left:1271px;top:21px;width:100px;height:23px;"><span>1</span></div>
<div class="c r m" style="left:1372px;top:21px;width:100px;height:23px;"><span>Rp1,200,000</span></div>
<div class="c l m" style="left:1574px;top:21px;width:128px;height:23px;"><span>Frosting</span></div>
<div class="c r m" style="left:1703px;top:21px;width:100px;height:23px;"><span>153</span></div>
<div class="c r m" style="left:1804px;top:21px;width:100px;height:23px;"><span>Rp3,000</span></div>
<div class="c r m" style="left:261px;top:45px;width:100px;height:23px;"><span>1,680</span></div>
<div class="c l m" style="left:564px;top:45px;width:100px;height:23px;"><span>Tissue</span></div>
<div class="c l m" style="left:665px;top:45px;width:100px;height:23px;font-style:italic;"><span>Offline</span></div>
<div class="c r m" style="left:766px;top:45px;width:100px;height:23px;"><span>1</span></div>
<div class="c r m" style="left:867px;top:45px;width:100px;height:23px;"><span>Rp15,000</span></div>
<div class="c r m" style="left:968px;top:45px;width:100px;height:23px;"><span>Rp15,000</span></div>
<div class="c l m" style="left:1170px;top:45px;width:100px;height:23px;"><span>Wifi</span></div>
<div class="c r m" style="left:1271px;top:45px;width:100px;height:23px;"><span>1</span></div>
<div class="c r m" style="left:1372px;top:45px;width:100px;height:23px;"><span>Rp220,000</span></div>
<div class="c l m" style="left:1574px;top:45px;width:128px;height:23px;"><span>Sticker</span></div>
<div class="c r m" style="left:1703px;top:45px;width:100px;height:23px;"><span>153</span></div>
<div class="c r m" style="left:1804px;top:45px;width:100px;height:23px;"><span>Rp1,000</span></div>
<div class="c r m" style="left:261px;top:69px;width:100px;height:23px;"><span>1,250</span></div>
<div class="c l m" style="left:564px;top:69px;width:100px;height:23px;"><span>Methanol</span></div>
<div class="c l m" style="left:665px;top:69px;width:100px;height:23px;font-style:italic;"><span>Offline</span></div>
<div class="c r m" style="left:766px;top:69px;width:100px;height:23px;"><span>15</span></div>
<div class="c r m" style="left:867px;top:69px;width:100px;height:23px;"><span>Rp25,000</span></div>
<div class="c r m" style="left:968px;top:69px;width:100px;height:23px;"><span>Rp375,000</span></div>
<div class="c l m" style="left:1170px;top:69px;width:100px;height:23px;font-weight:700;"><span>Total</span></div>
<div class="c r m" style="left:1372px;top:69px;width:100px;height:23px;font-weight:700;"><span>Rp19,120,000</span></div>
<div class="c l m" style="left:1574px;top:69px;width:128px;height:23px;"><span>Sticker</span></div>
<div class="c r m" style="left:1703px;top:69px;width:100px;height:23px;"><span>2.93</span></div>
<div class="c r m" style="left:1804px;top:69px;width:100px;height:23px;"><span>Rp3,050,000</span></div>
<div class="c r m" style="left:261px;top:93px;width:100px;height:23px;"><span>2,930</span></div>
<div class="c l m" style="left:564px;top:93px;width:100px;height:23px;"><span>Pulpen</span></div>
<div class="c l m" style="left:665px;top:93px;width:100px;height:23px;font-style:italic;"><span>Offline</span></div>
<div class="c r m" style="left:766px;top:93px;width:100px;height:23px;"><span>1</span></div>
<div class="c r m" style="left:867px;top:93px;width:100px;height:23px;"><span>Rp26,000</span></div>
<div class="c r m" style="left:968px;top:93px;width:100px;height:23px;"><span>Rp26,000</span></div>
<div class="c l m" style="left:1574px;top:93px;width:128px;height:23px;font-weight:700;"><span>Total</span></div>
<div class="c l m" style="left:564px;top:117px;width:100px;height:23px;"><span>Sticker</span></div>
<div class="c l m" style="left:665px;top:117px;width:100px;height:23px;font-style:italic;"><span>Offline</span></div>
<div class="c r m" style="left:766px;top:117px;width:100px;height:23px;"><span>29</span></div>
<div class="c r m" style="left:867px;top:117px;width:100px;height:23px;"><span>Rp250</span></div>
<div class="c r m" style="left:968px;top:117px;width:100px;height:23px;"><span>Rp7,250</span></div>
<div class="c l m" style="left:564px;top:141px;width:100px;height:23px;"><span>Nametag</span></div>
<div class="c l m" style="left:665px;top:141px;width:100px;height:23px;font-style:italic;"><span>Offline</span></div>
<div class="c r m" style="left:766px;top:141px;width:100px;height:23px;"><span>29</span></div>
<div class="c r m" style="left:867px;top:141px;width:100px;height:23px;"><span>Rp250</span></div>
<div class="c r m" style="left:968px;top:141px;width:100px;height:23px;"><span>Rp7,250</span></div>
<div class="c l m" style="left:564px;top:165px;width:100px;height:42px;"><span>Hiasan Foto<br>(Set)</span></div>
<div class="c l m" style="left:665px;top:165px;width:100px;height:42px;font-style:italic;padding-bottom:1px;"><span>Offline</span></div>
<div class="c r m" style="left:766px;top:165px;width:100px;height:42px;padding-bottom:1px;"><span>1</span></div>
<div class="c r m" style="left:867px;top:165px;width:100px;height:42px;padding-bottom:1px;"><span>Rp410,000</span></div>
<div class="c r m" style="left:968px;top:165px;width:100px;height:42px;padding-bottom:1px;"><span>Rp410,000</span></div>
<div class="c l m" style="left:564px;top:208px;width:100px;height:23px;"><span>Influencer #1</span></div>
<div class="c l m" style="left:665px;top:208px;width:100px;height:23px;font-style:italic;"><span>Transfer</span></div>
<div class="c r bt" style="left:766px;top:208px;width:100px;height:23px;font-family:'Liberation Sans',Arial,sans-serif;font-size:13.33px;line-height:16px;padding-bottom:1px;"><span>1</span></div>
<div class="c r m" style="left:867px;top:208px;width:100px;height:23px;"><span>Rp135,000</span></div>
<div class="c r m" style="left:968px;top:208px;width:100px;height:23px;"><span>Rp135,000</span></div>
<div class="c l m" style="left:147px;top:232px;width:113px;height:23px;font-weight:700;font-style:italic;"><span>Summarize</span></div>
<div class="c l m" style="left:261px;top:232px;width:100px;height:23px;font-weight:700;"><span>Total</span></div>
<div class="c l m" style="left:564px;top:232px;width:100px;height:23px;"><span>Influencer #2</span></div>
<div class="c l m" style="left:665px;top:232px;width:100px;height:23px;font-style:italic;"><span>Transfer</span></div>
<div class="c r bt" style="left:766px;top:232px;width:100px;height:23px;font-family:'Liberation Sans',Arial,sans-serif;font-size:13.33px;line-height:16px;padding-bottom:1px;"><span>1</span></div>
<div class="c r m" style="left:867px;top:232px;width:100px;height:23px;"><span>Rp400,000</span></div>
<div class="c r m" style="left:968px;top:232px;width:100px;height:23px;"><span>Rp400,000</span></div>
<div class="c l m" style="left:147px;top:256px;width:113px;height:23px;"><span>Pemasukan</span></div>
<div class="c r m" style="left:261px;top:256px;width:100px;height:23px;"><span>Rp31,002,000</span></div>
<div class="c l m" style="left:564px;top:256px;width:100px;height:23px;"><span>Influencer #3</span></div>
<div class="c l m" style="left:665px;top:256px;width:100px;height:23px;font-style:italic;"><span>Transfer</span></div>
<div class="c r bt" style="left:766px;top:256px;width:100px;height:23px;font-family:'Liberation Sans',Arial,sans-serif;font-size:13.33px;line-height:16px;padding-bottom:1px;"><span>1</span></div>
<div class="c r m" style="left:867px;top:256px;width:100px;height:23px;"><span>Rp120,000</span></div>
<div class="c r m" style="left:968px;top:256px;width:100px;height:23px;"><span>Rp120,000</span></div>
<div class="c l m" style="left:147px;top:280px;width:113px;height:42px;"><span>Pengeluaran<br>Variabel</span></div>
<div class="c r m" style="left:261px;top:280px;width:100px;height:42px;padding-bottom:1px;"><span>Rp2,760,761</span></div>
<div class="c l m" style="left:564px;top:280px;width:100px;height:42px;padding-bottom:1px;"><span>Influencer #4</span></div>
<div class="c l m" style="left:665px;top:280px;width:100px;height:42px;font-style:italic;padding-bottom:1px;"><span>Transfer</span></div>
<div class="c r bt" style="left:766px;top:280px;width:100px;height:42px;font-family:'Liberation Sans',Arial,sans-serif;font-size:13.33px;line-height:16px;padding-bottom:1px;"><span>1</span></div>
<div class="c r m" style="left:867px;top:280px;width:100px;height:42px;padding-bottom:1px;"><span>Rp700,000</span></div>
<div class="c r m" style="left:968px;top:280px;width:100px;height:42px;padding-bottom:1px;"><span>Rp700,000</span></div>
<div class="c l m" style="left:147px;top:323px;width:113px;height:42px;"><span>Pengeluaran<br>Tetap</span></div>
<div class="c r m" style="left:261px;top:323px;width:100px;height:42px;padding-bottom:1px;"><span>Rp19,120,000</span></div>
<div class="c l m" style="left:564px;top:323px;width:100px;height:42px;font-weight:700;padding-bottom:1px;"><span>Total</span></div>
<div class="c r m" style="left:968px;top:323px;width:100px;height:42px;font-weight:700;padding-bottom:1px;"><span>Rp2,760,761</span></div>
<div class="c l m" style="left:147px;top:366px;width:113px;height:23px;"><span>Produksi</span></div>
<div class="c r m" style="left:261px;top:366px;width:100px;height:23px;"><span>Rp14,518,600</span></div>
<div class="c l m" style="left:147px;top:390px;width:113px;height:80px;font-weight:700;"><span>Total<br>Pemasukan<br>(Include Biaya<br>Produksi)</span></div>
<div class="c r m" style="left:261px;top:390px;width:100px;height:80px;font-weight:700;padding-bottom:1px;"><span>-Rp5,397,361</span></div>
<div class="c l m" style="left:147px;top:471px;width:113px;height:80px;font-weight:700;"><span>Total<br>Pemasukan<br>(Exclude Biaya<br>Produksi)</span></div>
<div class="c r m" style="left:261px;top:471px;width:100px;height:80px;font-weight:700;padding-bottom:1px;"><span>Rp9,121,239</span></div>
<div class="c r m" style="left:564px;top:552px;width:100px;height:23px;"><span>912</span></div>
<div class="c r m" style="left:665px;top:639px;width:100px;height:23px;"><span>972</span></div>
<div class="b" style="left:146px;top:20px;width:317px;height:1px;background:#000;"></div>
<div class="b" style="left:146px;top:231px;width:216px;height:1px;background:#000;"></div>
<div class="b" style="left:146px;top:389px;width:216px;height:1px;background:#000;"></div>
<div class="b" style="left:146px;top:551px;width:216px;height:1px;background:#000;"></div>
<div class="b" style="left:563px;top:322px;width:506px;height:1px;background:#000;"></div>
<div class="b" style="left:563px;top:365px;width:506px;height:1px;background:#000;"></div>
<div class="b" style="left:1169px;top:68px;width:304px;height:1px;background:#000;"></div>
<div class="b" style="left:1169px;top:92px;width:304px;height:1px;background:#000;"></div>
<div class="b" style="left:1573px;top:92px;width:336px;height:1px;background:#000;"></div>
<div class="b" style="left:1573px;top:116px;width:336px;height:1px;background:#000;"></div>
</div>
<div class="b" style="left:0px;top:293px;width:1908px;height:1px;background:#c7c7c7;"></div>
<div class="b" style="left:0px;top:317px;width:1908px;height:1px;background:#c7c7c7;"></div>
<div class="b" style="left:1908px;top:293px;width:12px;height:25px;background:#f8f9fa;"></div>
<div class="ch" style="left:46px;width:100px;background:#d3e3fd;color:#041e49;font-weight:700;">A</div>
<div class="ch" style="left:147px;width:113px;">B</div>
<div class="ch" style="left:261px;width:100px;">C</div>
<div class="ch" style="left:362px;width:100px;">D</div>
<div class="ch" style="left:463px;width:100px;">E</div>
<div class="ch" style="left:564px;width:100px;">F</div>
<div class="ch" style="left:665px;width:100px;">G</div>
<div class="ch" style="left:766px;width:100px;">H</div>
<div class="ch" style="left:867px;width:100px;">I</div>
<div class="ch" style="left:968px;width:100px;">J</div>
<div class="ch" style="left:1069px;width:100px;">K</div>
<div class="ch" style="left:1170px;width:100px;">L</div>
<div class="ch" style="left:1271px;width:100px;">M</div>
<div class="ch" style="left:1372px;width:100px;">N</div>
<div class="ch" style="left:1473px;width:100px;">O</div>
<div class="ch" style="left:1574px;width:128px;">P</div>
<div class="ch" style="left:1703px;width:100px;">Q</div>
<div class="ch" style="left:1804px;width:100px;">R</div>
<div class="b" style="left:0px;top:294px;width:46px;height:24px;background:#f8f9fa;border-right:4px solid #bcbcbc;border-bottom:4px solid #bcbcbc;"></div>
<div class="b" style="left:1908px;top:318px;width:1px;height:724px;background:#e1e1e1;"></div>
<div class="b" style="left:1909px;top:318px;width:11px;height:724px;background:#ffffff;"></div>
<div class="b" style="left:1910px;top:331px;width:9px;height:26px;background:#dadce0;border-radius:5px;"></div>
<div class="b" style="left:1908px;top:997px;width:12px;height:1px;background:#e1e1e1;"></div>
<div class="b" style="left:1908px;top:1013px;width:12px;height:1px;background:#e1e1e1;"></div>
<svg style="left:1910px;top:1002px" width="8" height="5" viewBox="0 0 8 5"><path d="M0 5 H8 L4 0.5Z" fill="#777"/></svg>
<svg style="left:1910px;top:1019px" width="8" height="5" viewBox="0 0 8 5"><path d="M0 0 H8 L4 4.500Z" fill="#777"/></svg>
<div class="b" style="left:0px;top:1030px;width:1920px;height:12px;background:#ffffff;"></div>
<div class="b" style="left:0px;top:1029px;width:1908px;height:1px;background:#e1e1e1;"></div>
<div class="b" style="left:0px;top:1030px;width:46px;height:12px;background:#f8f9fa;border-right:1px solid #c7c7c7;"></div>
<div class="b" style="left:48px;top:1031px;width:1072px;height:9px;background:#dadce0;border-radius:5px;"></div>
<div class="b" style="left:1877px;top:1029px;width:1px;height:13px;background:#e1e1e1;"></div>
<div class="b" style="left:1893px;top:1029px;width:1px;height:13px;background:#e1e1e1;"></div>
<div class="b" style="left:1908px;top:1029px;width:1px;height:13px;background:#e1e1e1;"></div>
<svg style="left:1882px;top:1031px" width="5" height="8" viewBox="0 0 5 8"><path d="M5 0 V8 L0.5 4Z" fill="#777"/></svg>
<svg style="left:1899px;top:1031px" width="5" height="8" viewBox="0 0 5 8"><path d="M0 0 V8 L4.500 4Z" fill="#777"/></svg>
<div class="b" style="left:0px;top:1042px;width:1920px;height:1px;background:#e1e3e6;"></div>
<div class="b" style="left:0px;top:1043px;width:1920px;height:35px;background:#f9fbfd;"></div>
<div class="b" style="left:0px;top:1078px;width:1920px;height:2px;background:#000000;"></div>
<svg style="left:55px;top:1056px" width="14" height="10" viewBox="0 0 14 10"><path d="M0 1 H14 M0 5 H14 M0 9 H14" stroke="#444746" stroke-width="1.4" fill="none"/></svg>
<div class="b" style="left:849px;top:1043px;width:144px;height:35px;background:#e1e9f7;"></div>
<span class="t" id="t42" style="left:107px;top:1046.5px;height:30px;line-height:30px;font-size:14.5px;color:#444746;font-weight:400;font-family:'Liberation Sans', Arial, sans-serif;font-style:normal;transform:scaleX(1.0494);transform-origin:left center;-webkit-text-stroke:0.25px #444746;">Rekapan Total</span>
<svg style="left:214px;top:1059px" width="9" height="6" viewBox="0 0 9 6"><path d="M0.5 0.6 H8.5 L4.5 5Z" fill="#444746"/></svg>
<span class="t" id="t43" style="left:248px;top:1046.5px;height:30px;line-height:30px;font-size:14.5px;color:#444746;font-weight:400;font-family:'Liberation Sans', Arial, sans-serif;font-style:normal;transform:scaleX(1.0744);transform-origin:left center;-webkit-text-stroke:0.25px #444746;">Februari 2025</span>
<svg style="left:355px;top:1059px" width="9" height="6" viewBox="0 0 9 6"><path d="M0.5 0.6 H8.5 L4.5 5Z" fill="#444746"/></svg>
<span class="t" id="t44" style="left:389px;top:1046.5px;height:30px;line-height:30px;font-size:14.5px;color:#444746;font-weight:400;font-family:'Liberation Sans', Arial, sans-serif;font-style:normal;transform:scaleX(1.0633);transform-origin:left center;-webkit-text-stroke:0.25px #444746;">Maret 2025</span>
<svg style="left:479px;top:1059px" width="9" height="6" viewBox="0 0 9 6"><path d="M0.5 0.6 H8.5 L4.5 5Z" fill="#444746"/></svg>
<span class="t" id="t45" style="left:512px;top:1046.5px;height:30px;line-height:30px;font-size:14.5px;color:#444746;font-weight:400;font-family:'Liberation Sans', Arial, sans-serif;font-style:normal;transform:scaleX(1.0720);transform-origin:left center;-webkit-text-stroke:0.25px #444746;">April 2025</span>
<svg style="left:594px;top:1059px" width="9" height="6" viewBox="0 0 9 6"><path d="M0.5 0.6 H8.5 L4.5 5Z" fill="#444746"/></svg>
<span class="t" id="t46" style="left:627px;top:1046.5px;height:30px;line-height:30px;font-size:14.5px;color:#444746;font-weight:400;font-family:'Liberation Sans', Arial, sans-serif;font-style:normal;transform:scaleX(1.0561);transform-origin:left center;-webkit-text-stroke:0.25px #444746;">Mei 2025</span>
<svg style="left:701px;top:1059px" width="9" height="6" viewBox="0 0 9 6"><path d="M0.5 0.6 H8.5 L4.5 5Z" fill="#444746"/></svg>
<span class="t" id="t47" style="left:734px;top:1046.5px;height:30px;line-height:30px;font-size:14.5px;color:#444746;font-weight:400;font-family:'Liberation Sans', Arial, sans-serif;font-style:normal;transform:scaleX(1.0525);transform-origin:left center;-webkit-text-stroke:0.25px #444746;">Online Shop</span>
<svg style="left:829px;top:1059px" width="9" height="6" viewBox="0 0 9 6"><path d="M0.5 0.6 H8.5 L4.5 5Z" fill="#444746"/></svg>
<span class="t" id="t48" style="left:862px;top:1046.5px;height:30px;line-height:30px;font-size:14.5px;color:#0b57d0;font-weight:700;font-family:'Liberation Sans', Arial, sans-serif;font-style:normal;transform:scaleX(1.0209);transform-origin:left center;">Rekapan April</span>
<svg style="left:972px;top:1059px" width="9" height="6" viewBox="0 0 9 6"><path d="M0.5 0.6 H8.5 L4.5 5Z" fill="#0b57d0"/></svg>
<span class="t" id="t49" style="left:1005px;top:1046.5px;height:30px;line-height:30px;font-size:14.5px;color:#444746;font-weight:400;font-family:'Liberation Sans', Arial, sans-serif;font-style:normal;transform:scaleX(1.0583);transform-origin:left center;-webkit-text-stroke:0.25px #444746;">Beauty Days Out</span>
<svg style="left:1132px;top:1059px" width="9" height="6" viewBox="0 0 9 6"><path d="M0.5 0.6 H8.5 L4.5 5Z" fill="#444746"/></svg>
<svg style="left:1888px;top:1056.300px" width="8" height="13" viewBox="0 0 8 13"><path d="M7 1 L1.5 6.5 L7 12" fill="none" stroke="#1f1f1f" stroke-width="1.8"/></svg>
</body></html>
